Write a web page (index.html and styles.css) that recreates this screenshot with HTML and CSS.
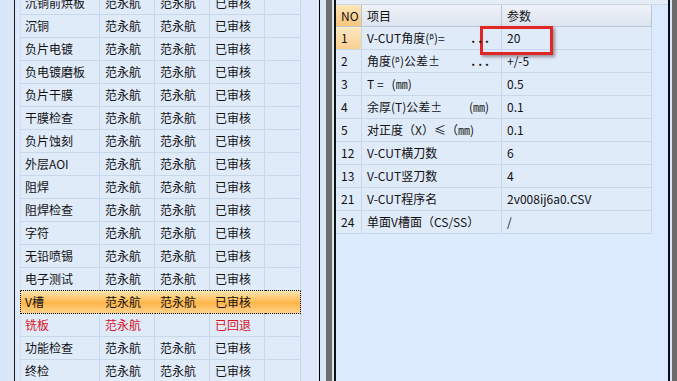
FILE: index.html
```html
<!DOCTYPE html>
<html lang="zh-CN">
<head>
<meta charset="UTF-8">
<title>工序审核</title>
<link rel="stylesheet" href="styles.css">
</head>
<body>
<div class="gap-left"></div>

<div class="left-panel">
    <table class="flow-grid">
        <colgroup>
            <col class="c-name"><col class="c-user"><col class="c-user"><col class="c-user"><col class="c-rest">
        </colgroup>
        <tr><td>沉铜前烘板</td><td>范永航</td><td>范永航</td><td>已审核</td><td></td></tr>
        <tr><td>沉铜</td><td>范永航</td><td>范永航</td><td>已审核</td><td></td></tr>
        <tr><td>负片电镀</td><td>范永航</td><td>范永航</td><td>已审核</td><td></td></tr>
        <tr><td>负电镀磨板</td><td>范永航</td><td>范永航</td><td>已审核</td><td></td></tr>
        <tr><td>负片干膜</td><td>范永航</td><td>范永航</td><td>已审核</td><td></td></tr>
        <tr><td>干膜检查</td><td>范永航</td><td>范永航</td><td>已审核</td><td></td></tr>
        <tr><td>负片蚀刻</td><td>范永航</td><td>范永航</td><td>已审核</td><td></td></tr>
        <tr><td>外层AOI</td><td>范永航</td><td>范永航</td><td>已审核</td><td></td></tr>
        <tr><td>阻焊</td><td>范永航</td><td>范永航</td><td>已审核</td><td></td></tr>
        <tr><td>阻焊检查</td><td>范永航</td><td>范永航</td><td>已审核</td><td></td></tr>
        <tr><td>字符</td><td>范永航</td><td>范永航</td><td>已审核</td><td></td></tr>
        <tr><td>无铅喷锡</td><td>范永航</td><td>范永航</td><td>已审核</td><td></td></tr>
        <tr class="pre-sel"><td>电子测试</td><td>范永航</td><td>范永航</td><td>已审核</td><td></td></tr>
        <tr class="selected"><td>V槽</td><td>范永航</td><td>范永航</td><td>已审核</td><td></td></tr>
        <tr class="rejected"><td>铣板</td><td>范永航</td><td></td><td>已回退</td><td></td></tr>
        <tr><td>功能检查</td><td>范永航</td><td>范永航</td><td>已审核</td><td></td></tr>
        <tr><td>终检</td><td>范永航</td><td>范永航</td><td>已审核</td><td></td></tr>
    </table>
</div>

<div class="splitter"><div class="splitter-bar"></div></div>

<div class="right-panel">
    <div class="grid-top"></div>
    <table class="param-grid">
        <colgroup>
            <col class="c-no"><col class="c-item"><col class="c-val"><col class="c-fill">
        </colgroup>
        <tr class="head"><th class="no">NO</th><th>项目</th><th>参数</th><th class="fill"></th></tr>
        <tr class="current"><td class="no">1</td><td><div class="split"><span>V-CUT角度(ᵝ)=</span><span class="dots">...</span></div></td><td>20</td><td class="fill"></td></tr>
        <tr><td class="no">2</td><td><div class="split"><span>角度(ᵝ)公差±</span><span class="dots">...</span></div></td><td>+/-5</td><td class="fill"></td></tr>
        <tr><td class="no">3</td><td>T =&nbsp;&nbsp; (㎜)</td><td>0.5</td><td class="fill"></td></tr>
        <tr><td class="no">4</td><td><div class="split"><span>余厚(T)公差±</span><span>(㎜)</span></div></td><td>0.1</td><td class="fill"></td></tr>
        <tr><td class="no">5</td><td>对正度（X）≤（㎜)</td><td>0.1</td><td class="fill"></td></tr>
        <tr><td class="no">12</td><td>V-CUT横刀数</td><td>6</td><td class="fill"></td></tr>
        <tr><td class="no">13</td><td>V-CUT竖刀数</td><td>4</td><td class="fill"></td></tr>
        <tr><td class="no">21</td><td>V-CUT程序名</td><td>2v008ij6a0.CSV</td><td class="fill"></td></tr>
        <tr><td class="no">24</td><td>单面V槽面（CS/SS）</td><td>/</td><td class="fill"></td></tr>
    </table>
    <div class="mark-box"></div>
</div>

<div class="gap-right"></div>
<div class="edge-right"></div>
</body>
</html>
```

FILE: styles.css
```css
body{
    margin: 0;
    width: 677px;
    height: 381px;
    overflow: hidden;
    display: flex;
    background: #d9e7f8;
    font-family: "Noto Sans CJK SC", "DejaVu Sans", sans-serif;
    font-size: 12px;
    color: #111;
}

.gap-left{
    width: 14px;
    flex: none;
}

/* 左侧工序列表 */
.left-panel{
    width: 299px;
    flex: none;
    padding-left: 5px;
    border-left: 1px solid #1a1a1a;
    border-right: 1px solid #000;
    background: #dde9fa;
    overflow: hidden;
}
.flow-grid{
    table-layout: fixed;
    border-collapse: separate;
    border-spacing: 0;
    width: 281px;
    margin-top: -8px;
}
.flow-grid .c-name{ width: 80px; }
.flow-grid .c-user{ width: 55px; }
.flow-grid .c-rest{ width: 36px; }
.flow-grid td{
    height: 22px;
    padding: 0 0 0 5px;
    line-height: 22px;
    white-space: nowrap;
    overflow: hidden;
    background: #e0ebfa;
    border-right: 1px solid #c9d7ea;
    border-bottom: 1px solid #c9d7ea;
}
.flow-grid td:first-child{
    padding-left: 4px;
    border-left: 1px solid #d3dff0;
}
.flow-grid .pre-sel td{
    border-bottom: 1px dotted #000;
}
.flow-grid .selected td{
    background: linear-gradient(#ffe4ae, #ffb64a 55%, #ffd38a);
    border-right-color: transparent;
    border-bottom: 1px dotted #000;
}
.flow-grid .selected td:first-child{
    border-left: 1px dotted #000;
}
.flow-grid .selected td:last-child{
    border-right: 1px dotted #000;
}
.flow-grid .rejected td{
    color: #d8141e;
}

.splitter{
    width: 14px;
    flex: none;
    padding-left: 6px;
    box-sizing: border-box;
    background: #dbe8f8;
}
.splitter-bar{
    width: 6px;
    height: 100%;
    background: #6e6e6e;
}

/* 右侧参数表 */
.right-panel{
    position: relative;
    width: 332px;
    flex: none;
    border-left: 2px solid #111;
    border-right: 2px solid #0c0c1a;
    background: #dbeafd;
}
.grid-top{
    height: 5px;
    background: #e4ecf6;
    border-bottom: 1px solid #cdd7e4;
    box-sizing: border-box;
}
.param-grid{
    table-layout: fixed;
    border-collapse: separate;
    border-spacing: 0;
    width: 332px;
}
.param-grid .c-no{ width: 26px; }
.param-grid .c-item{ width: 140px; }
.param-grid .c-val{ width: 150px; }
.param-grid .c-fill{ width: 16px; }
.param-grid th{
    height: 21px;
    padding: 0 0 0 5px;
    font-weight: normal;
    text-align: left;
    line-height: 21px;
    background: linear-gradient(#eef2f8, #dce4ef);
    border-right: 1px solid #b9c6d6;
    border-bottom: 1px solid #b9c6d6;
}
.param-grid th.no{
    background: linear-gradient(#fde7b9, #f8c67c);
}
.param-grid td{
    height: 22px;
    padding: 0 0 0 5px;
    line-height: 22px;
    white-space: nowrap;
    overflow: hidden;
    background: #e0ebfa;
    border-right: 1px solid #c9d7ea;
    border-bottom: 1px solid #c9d7ea;
}
.param-grid .split{
    display: flex;
    justify-content: space-between;
    padding-right: 12px;
}
.param-grid .dots{
    position: relative;
    z-index: 1;
    margin-right: -3px;
    letter-spacing: 3px;
    font-weight: bold;
}
.param-grid .fill{
    background: #dbeafd;
    border: none;
}
.param-grid .current td.no{
    background: linear-gradient(#fde9c3, #f9cf91);
}

.mark-box{
    position: absolute;
    left: 144px;
    top: 26px;
    width: 67px;
    height: 23px;
    border: 3px solid #e12626;
    box-shadow: 2px 2px 3px rgba(60, 30, 30, 0.45);
}

.gap-right{
    width: 2px;
    flex: none;
}
.edge-right{
    width: 6px;
    flex: none;
    background: #6c6c6c;
}
```
